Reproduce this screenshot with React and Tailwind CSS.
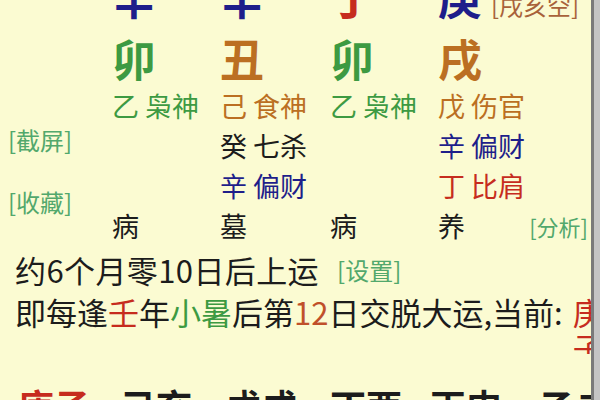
import React from 'react';

const navy = 'text-[#1e1e8a]';
const red = 'text-[#c62c1e]';
const green = 'text-[#3d9a42]';
const brown = 'text-[#bb6f22]';
const ink = 'text-[#1c1c1c]';
const link = 'text-[#52a86c]';

const cols = 'grid grid-cols-[108px_110px_108px_1fr]';

function Pair({ stem, god, color }) {
  return (
    <span className={`${color} whitespace-nowrap`}>
      {stem}
      <span className="ml-[6px]">{god}</span>
    </span>
  );
}

export default function App() {
  return (
    <div
      className="w-[600px] h-[400px] overflow-hidden flex bg-[#fbfbd2]"
      style={{ fontFamily: '"Noto Sans CJK SC", "Noto Sans", sans-serif' }}
    >
      <div className="flex-1 overflow-hidden">
        {/* 天干 */}
        <div className="mt-[-26px] h-[62px] pl-[112px]">
          <div className={`${cols} text-[44px] leading-[44px] font-bold`}>
            <span className={navy}>辛</span>
            <span className={navy}>辛</span>
            <span className={red}>丁</span>
            <span className="flex items-baseline whitespace-nowrap">
              <span className={navy}>庚</span>
              <span className="ml-[9px] text-[24px] font-normal text-[#a8623a]">[戌亥空]</span>
            </span>
          </div>
        </div>

        {/* 地支 */}
        <div className="h-[50px] pl-[112px]">
          <div className={`${cols} text-[44px] leading-[44px] font-bold`}>
            <span className={green}>卯</span>
            <span className={brown}>丑</span>
            <span className={green}>卯</span>
            <span className={brown}>戌</span>
          </div>
        </div>

        {/* 藏干 */}
        <div className="h-[40px] pl-[112px]">
          <div className={`${cols} text-[27px] leading-[40px]`}>
            <Pair stem="乙" god="枭神" color={green} />
            <Pair stem="己" god="食神" color={brown} />
            <Pair stem="乙" god="枭神" color={green} />
            <Pair stem="戊" god="伤官" color={brown} />
          </div>
        </div>

        <div className="flex h-[120px]">
          <div className={`w-[112px] pl-[8px] text-[24px] leading-[28px] ${link}`}>
            <div>[截屏]</div>
            <div className="mt-[34px]">[收藏]</div>
          </div>
          <div className={`flex-1 ${cols} text-[27px] leading-[40px]`}>
            <span />
            <Pair stem="癸" god="七杀" color={ink} />
            <span />
            <Pair stem="辛" god="偏财" color={navy} />

            <span />
            <Pair stem="辛" god="偏财" color={navy} />
            <span />
            <Pair stem="丁" god="比肩" color={red} />

            <span className={ink}>病</span>
            <span className={ink}>墓</span>
            <span className={ink}>病</span>
            <span className="flex items-center justify-between pr-[3px]">
              <span className={ink}>养</span>
              <span className={`text-[22px] ${link}`}>[分析]</span>
            </span>
          </div>
        </div>

        {/* 起运 */}
        <div className={`mt-[2px] pl-[15px] flex items-center h-[44px] whitespace-nowrap ${ink}`}>
          <span className="text-[31px] tracking-[0.4px]">约6个月零10日后上运</span>
          <span className={`ml-[18px] text-[24px] ${link}`}>[设置]</span>
        </div>

        <div className={`pl-[15px] flex items-start whitespace-nowrap ${ink}`}>
          <span className="text-[31px] leading-[40px]">
            即每逢<span className={red}>壬</span>年<span className={green}>小暑</span>后第
            <span className="text-[#c0502a]">12</span>日交脱大运,当前:
          </span>
          <span className={`ml-[10px] flex flex-col text-[31px] ${red}`}>
            <span className="leading-[40px]">庚</span>
            <span className="h-[22px] overflow-hidden leading-[30px]">子</span>
          </span>
        </div>

        {/* 大运 */}
        <div className="mt-[33px] pl-[18px] flex text-[36px] leading-[36px] font-bold whitespace-nowrap">
          <span className={`w-[102px] shrink-0 ${red}`}>庚子</span>
          <span className={`w-[105px] shrink-0 ${ink}`}>己亥</span>
          <span className={`w-[105px] shrink-0 ${ink}`}>戊戌</span>
          <span className={`w-[100px] shrink-0 ${ink}`}>丁酉</span>
          <span className={`w-[110px] shrink-0 ${ink}`}>丙申</span>
          <span className={`shrink-0 ${ink}`}>乙未</span>
        </div>
      </div>

      {/* 滚动条 */}
      <div className="w-[9px] shrink-0 border-l-[3px] border-[#7a7a7a] bg-[#c4c4c4]" />
    </div>
  );
}
